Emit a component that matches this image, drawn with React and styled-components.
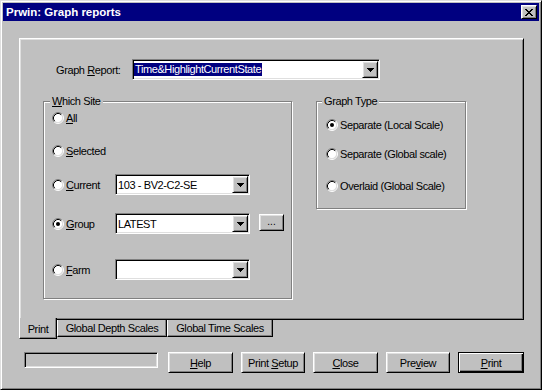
import React from "react";
import styled, { createGlobalStyle } from "styled-components";

const GlobalStyle = createGlobalStyle`
  html, body {
    margin: 0;
    padding: 0;
    background: #c0c0c0;
  }
  body {
    font-family: "Liberation Sans", Arial, sans-serif;
    font-size: 11px;
    letter-spacing: -0.4px;
    color: #000;
  }
  * {
    box-sizing: border-box;
  }
`;

const Window = styled.div`
  width: 542px;
  height: 390px;
  background: #c0c0c0;
  border: 1px solid;
  border-color: #dfdfdf #000 #000 #dfdfdf;
  box-shadow: inset 1px 1px #fff, inset -1px -1px #808080;
  padding: 2px;
  display: flex;
  flex-direction: column;
`;

const TitleBar = styled.div`
  height: 18px;
  flex: none;
  background: #000080;
  color: #fff;
  font-weight: bold;
  font-size: 11.5px;
  letter-spacing: 0;
  display: flex;
  align-items: center;
  justify-content: space-between;
  padding: 0 2px 0 3px;
`;

const Raised = styled.div`
  background: #c0c0c0;
  border: 1px solid;
  border-color: #fff #000 #000 #fff;
  box-shadow: inset 1px 1px #dfdfdf, inset -1px -1px #808080;
  display: flex;
  align-items: center;
  justify-content: center;
`;

const CloseButton = styled(Raised)`
  width: 16px;
  height: 14px;
  padding-top: 1px;
`;

const Client = styled.div`
  flex: 1;
  padding: 17px 0 0 16px;
  display: flex;
  flex-direction: column;
`;

const Panel = styled.div`
  width: 505px;
  height: 282px;
  border: 1px solid;
  border-color: #fff #000 #000 #fff;
  box-shadow: inset 1px 1px #dfdfdf, inset -1px -1px #808080;
  padding: 1px;
  display: flex;
  flex-direction: column;
`;

const ReportRow = styled.div`
  margin-top: 19px;
  padding-left: 35px;
  display: flex;
  align-items: center;
`;

const ReportLabel = styled.span`
  width: 76px;
`;

const Combo = styled.div`
  width: ${(p) => p.$w}px;
  height: 21px;
  flex: none;
  background: #fff;
  border: 1px solid;
  border-color: #808080 #fff #fff #808080;
  box-shadow: inset 1px 1px #000, inset -1px -1px #dfdfdf;
  padding: 1px;
  display: flex;
  align-items: stretch;
`;

const ComboValue = styled.div`
  flex: 1;
  display: flex;
  align-items: center;
  padding-left: ${(p) => (p.$selected ? 0 : 1)}px;
  white-space: nowrap;
  overflow: hidden;
`;

const Highlight = styled.span`
  background: #000080;
  color: #fff;
  line-height: 13px;
  padding: 0 1px;
`;

const DropButton = styled(Raised)`
  width: 16px;
  flex: none;
`;

const GroupsRow = styled.div`
  margin-top: 21px;
  padding-left: 22px;
  display: flex;
  align-items: flex-start;
  gap: 24px;
`;

const Group = styled.div`
  position: relative;
  width: ${(p) => p.$w}px;
  height: ${(p) => p.$h}px;
  border: 1px solid #808080;
  box-shadow: inset 1px 1px #fff, 1px 1px #fff;
  padding-left: ${(p) => p.$pad}px;
  display: flex;
  flex-direction: column;
`;

const Legend = styled.span`
  position: absolute;
  top: -7px;
  left: ${(p) => p.$left}px;
  padding: 0 2px;
  line-height: 13px;
  background: #c0c0c0;
`;

const Row = styled.div`
  height: 21px;
  margin-top: ${(p) => p.$top}px;
  display: flex;
  align-items: center;
`;

const RadioLabel = styled.label`
  display: flex;
  align-items: center;
  gap: 2px;
  width: ${(p) => (p.$w ? `${p.$w}px` : "auto")};
  flex: none;
  white-space: nowrap;
`;

const MoreButton = styled(Raised)`
  width: 25px;
  height: 17px;
  margin-left: 9px;
  margin-top: -2px;
  font-size: 10px;
  letter-spacing: 0;
  padding-bottom: 3px;
`;

const TabRow = styled.div`
  display: flex;
  align-items: flex-start;
`;

const Tab = styled.div`
  position: relative;
  width: ${(p) => p.$w}px;
  height: ${(p) => (p.$active ? 21 : 17)}px;
  margin-top: ${(p) => (p.$active ? -2 : 0)}px;
  z-index: ${(p) => (p.$active ? 1 : 0)};
  background: #c0c0c0;
  border-left: 1px solid #fff;
  border-right: 1px solid #000;
  border-bottom: 1px solid #000;
  box-shadow: inset -1px -1px #808080;
  display: flex;
  align-items: center;
  justify-content: center;
  padding-top: ${(p) => (p.$active ? 2 : 0)}px;
  white-space: nowrap;
`;

const BottomRow = styled.div`
  margin-top: 13px;
  padding-left: 5px;
  display: flex;
  align-items: flex-start;
`;

const StatusBox = styled.div`
  width: 134px;
  height: 16px;
  margin-right: 10px;
  border: 1px solid;
  border-color: #808080 #fff #fff #808080;
  box-shadow: inset 1px 1px #000, inset -1px -1px #dfdfdf;
`;

const Buttons = styled.div`
  display: flex;
  gap: 8px;
`;

const Button = styled(Raised)`
  width: ${(p) => p.$w}px;
  height: 21px;
  white-space: nowrap;
  ${(p) =>
    p.$default &&
    `
    border: 1px solid #000;
    box-shadow: inset 1px 1px #fff, inset -1px -1px #000, inset -2px -2px #808080;
  `}
`;

const CloseIcon = () => (
  <svg width="8" height="7" viewBox="0 0 8 7">
    <path
      fill="#000"
      d="M0 0h2v1H0zM6 0h2v1H6zM1 1h2v1H1zM5 1h2v1H5zM2 2h4v1H2zM3 3h2v1H3zM2 4h4v1H2zM1 5h2v1H1zM5 5h2v1H5zM0 6h2v1H0zM6 6h2v1H6z"
    />
  </svg>
);

const Arrow = () => (
  <svg width="7" height="4" viewBox="0 0 7 4">
    <path fill="#000" d="M0 0h7v1H0zM1 1h5v1H1zM2 2h3v1H2zM3 3h1v1H3z" />
  </svg>
);

const Radio = ({ checked }) => (
  <svg width="12" height="12" viewBox="0 0 12 12">
    <circle cx="6" cy="6" r="4.5" fill="#fff" />
    <path d="M2.11 9.89A5.5 5.5 0 0 1 9.89 2.11" stroke="#808080" fill="none" />
    <path d="M9.89 2.11A5.5 5.5 0 0 1 2.11 9.89" stroke="#fff" fill="none" />
    <path d="M2.82 9.18A4.5 4.5 0 0 1 9.18 2.82" stroke="#000" fill="none" />
    <path d="M9.18 2.82A4.5 4.5 0 0 1 2.82 9.18" stroke="#dfdfdf" fill="none" />
    {checked && <circle cx="6" cy="6" r="2" fill="#000" />}
  </svg>
);

const DropDown = ({ w, children, selected }) => (
  <Combo $w={w}>
    <ComboValue $selected={selected}>{children}</ComboValue>
    <DropButton>
      <Arrow />
    </DropButton>
  </Combo>
);

const graphTypes = [
  { top: 12, label: "Separate (Local Scale)", checked: true },
  { top: 8, label: "Separate (Global scale)" },
  { top: 11, label: "Overlaid (Global Scale)" },
];

const tabs = [
  { w: 38, label: "Print", active: true },
  { w: 110, label: "Global Depth Scales" },
  { w: 106, label: "Global Time Scales" },
];

const buttons = [
  { w: 65, label: <><u>H</u>elp</> },
  { w: 64, label: <>Print <u>S</u>etup</> },
  { w: 65, label: <><u>C</u>lose</> },
  { w: 64, label: <>Pre<u>v</u>iew</> },
  { w: 66, label: <><u>P</u>rint</>, isDefault: true },
];

const App = () => {
  return (
    <>
      <GlobalStyle />
      <Window>
        <TitleBar>
          <span>Prwin: Graph reports</span>
          <CloseButton>
            <CloseIcon />
          </CloseButton>
        </TitleBar>
        <Client>
          <Panel>
            <ReportRow>
              <ReportLabel>
                Graph <u>R</u>eport:
              </ReportLabel>
              <DropDown w={248} selected>
                <Highlight>Time&amp;HighlightCurrentState</Highlight>
              </DropDown>
            </ReportRow>
            <GroupsRow>
              <Group $w={249} $h={198} $pad={8}>
                <Legend $left={6}>
                  <u>W</u>hich Site
                </Legend>
                <Row $top={5}>
                  <RadioLabel>
                    <Radio />
                    <span>
                      <u>A</u>ll
                    </span>
                  </RadioLabel>
                </Row>
                <Row $top={12}>
                  <RadioLabel>
                    <Radio />
                    <span>
                      <u>S</u>elected
                    </span>
                  </RadioLabel>
                </Row>
                <Row $top={13}>
                  <RadioLabel $w={63}>
                    <Radio />
                    <span>
                      <u>C</u>urrent
                    </span>
                  </RadioLabel>
                  <DropDown w={135}>103 - BV2-C2-SE</DropDown>
                </Row>
                <Row $top={18}>
                  <RadioLabel $w={63}>
                    <Radio checked />
                    <span>
                      <u>G</u>roup
                    </span>
                  </RadioLabel>
                  <DropDown w={135}>LATEST</DropDown>
                  <MoreButton>...</MoreButton>
                </Row>
                <Row $top={25}>
                  <RadioLabel $w={63}>
                    <Radio />
                    <span>
                      <u>F</u>arm
                    </span>
                  </RadioLabel>
                  <DropDown w={135} />
                </Row>
              </Group>
              <Group $w={150} $h={108} $pad={9}>
                <Legend $left={5}>Graph Type</Legend>
                {graphTypes.map((t) => (
                  <Row key={t.label} $top={t.top}>
                    <RadioLabel>
                      <Radio checked={t.checked} />
                      <span>{t.label}</span>
                    </RadioLabel>
                  </Row>
                ))}
              </Group>
            </GroupsRow>
          </Panel>
          <TabRow>
            {tabs.map((t) => (
              <Tab key={t.label} $w={t.w} $active={t.active}>
                {t.label}
              </Tab>
            ))}
          </TabRow>
          <BottomRow>
            <StatusBox />
            <Buttons>
              {buttons.map((b, i) => (
                <Button key={i} $w={b.w} $default={b.isDefault}>
                  <span>{b.label}</span>
                </Button>
              ))}
            </Buttons>
          </BottomRow>
        </Client>
      </Window>
    </>
  );
};

export default App;
